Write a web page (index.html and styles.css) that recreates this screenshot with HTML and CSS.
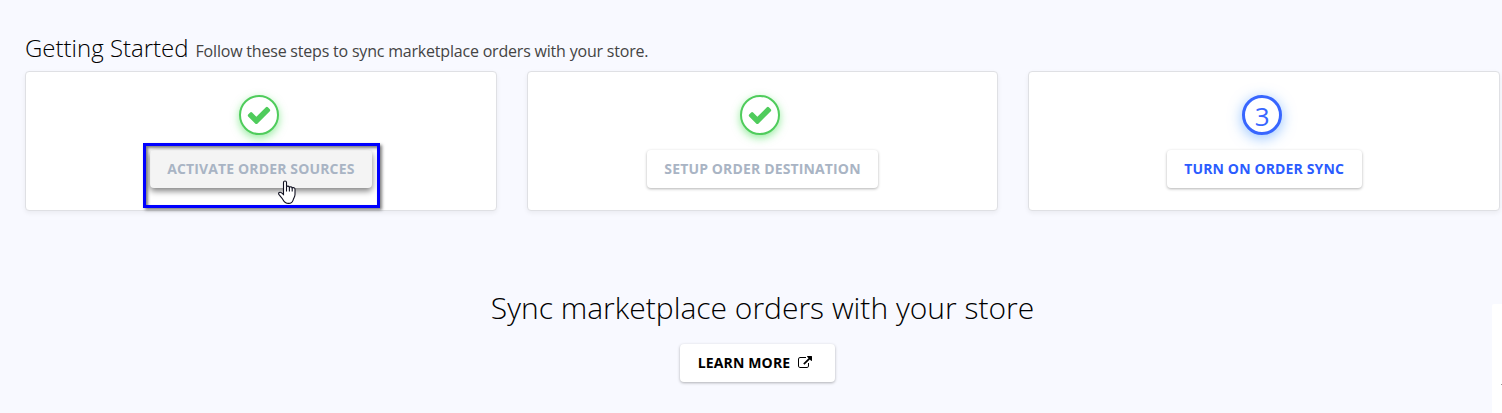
FILE: index.html
```html
<!DOCTYPE html>
<html lang="en">
<head>
  <meta charset="UTF-8">
  <title>Getting Started</title>
  <link rel="stylesheet" href="styles.css">
</head>
<body>

  <div class="page">
    <header class="heading">
      <h1>Getting Started</h1>
      <p>Follow these steps to sync marketplace orders with your store.</p>
    </header>

    <!-- Steps -->
    <div class="steps">
      <div class="card">
        <div class="circle done">
          <svg class="check" viewBox="0 0 1792 1792"><path d="M1671 566q0 40-28 68l-724 724-136 136q-28 28-68 28t-68-28l-136-136-362-362q-28-28-28-68t28-68l136-136q28-28 68-28t68 28l294 295 656-657q28-28 68-28t68 28l136 136q28 28 28 68z"/></svg>
        </div>
        <button class="btn muted hovered">Activate Order Sources</button>
        <div class="highlight"></div>
        <svg class="cursor" viewBox="0 0 18 24">
          <path d="M5.5 14.5V2.6c0-2.1 3-2.1 3 0v4.2c.5-1 2.7-.9 2.9.5.6-.8 2.6-.6 2.8.7 1-.7 2.8-.2 2.8 1.2v5.3c0 2.2-1.3 3.6-1.8 5.3-.7 2.2-2.2 3.6-4.6 3.6-2.9 0-4.4-1.3-5.6-3.7-.9-1.8-2.6-3.4-4-5.1-1.3-1.7 1-3.2 2.6-1.8z"/>
          <path d="M8.5 6.8v4.8M11.4 7.4v4.2M14.2 8.2v3.4"/>
        </svg>
      </div>

      <div class="card">
        <div class="circle done">
          <svg class="check" viewBox="0 0 1792 1792"><path d="M1671 566q0 40-28 68l-724 724-136 136q-28 28-68 28t-68-28l-136-136-362-362q-28-28-28-68t28-68l136-136q28-28 68-28t68 28l294 295 656-657q28-28 68-28t68 28l136 136q28 28 28 68z"/></svg>
        </div>
        <button class="btn muted">Setup Order Destination</button>
      </div>

      <div class="card">
        <div class="circle current">3</div>
        <button class="btn primary">Turn On Order Sync</button>
      </div>
    </div>

    <!-- Intro -->
    <section class="intro">
      <h2>Sync marketplace orders with your store</h2>
      <button class="btn learn-more">Learn More
        <svg class="external" viewBox="0 0 1792 1792"><path d="M1408 928v320q0 119-84.5 203.5t-203.5 84.5h-832q-119 0-203.5-84.5t-84.5-203.5v-832q0-119 84.5-203.5t203.5-84.5h704q14 0 23 9t9 23v64q0 14-9 23t-23 9h-704q-66 0-113 47t-47 113v832q0 66 47 113t113 47h832q66 0 113-47t47-113v-320q0-14 9-23t23-9h64q14 0 23 9t9 23zm384-864v512q0 26-19 45t-45 19-45-19l-176-176-652 652q-10 10-23 10t-23-10l-114-114q-10-10-10-23t10-23l652-652-176-176q-19-19-19-45t19-45 45-19h512q26 0 45 19t19 45z"/></svg>
      </button>
    </section>
  </div>

  <!-- Side widget -->
  <div class="side-tab"></div>

</body>
</html>
```
FILE: styles.css
```css
* {
  box-sizing: border-box;
}

body {
  margin: 0;
  height: 413px;
  overflow: hidden;
  background: #f8f9ff;
  color: #000;
  font-family: "Open Sans", sans-serif;
}

.page {
  padding: 31px 2px 0 25px;
}

.heading {
  display: flex;
  align-items: baseline;
  gap: 7px;
  height: 40px;
}

.heading h1 {
  margin: 0;
  font-size: 24px;
  font-weight: 300;
  line-height: 34px;
}

.heading p {
  margin: 0;
  font-size: 16px;
  letter-spacing: -0.2px;
  color: #444;
}

.steps {
  display: grid;
  grid-template-columns: repeat(3, 1fr);
  gap: 30px;
}

.card {
  position: relative;
  display: flex;
  flex-direction: column;
  align-items: center;
  height: 140px;
  padding-top: 23px;
  background: #fff;
  border: 1px solid #dfe0e4;
  border-radius: 4px;
  box-shadow: 0 2px 5px rgba(0, 0, 0, 0.06);
}

.circle {
  display: flex;
  align-items: center;
  justify-content: center;
  width: 40px;
  height: 40px;
  margin: 0 4px 15px 0;
  border-radius: 50%;
  background: #fff;
}

.circle.done {
  border: 2px solid #4fcc5c;
  box-shadow: 0 3px 8px rgba(64, 220, 80, 0.55);
}

.circle.current {
  padding-top: 2px;
  border: 3px solid #3866ff;
  box-shadow: 0 3px 14px rgba(60, 145, 255, 0.55);
  color: #3866ff;
  font-size: 26px;
  font-weight: 500;
  line-height: 34px;
}

.check {
  width: 26px;
  height: 26px;
  fill: #4fcc5c;
}

.btn {
  display: flex;
  align-items: center;
  justify-content: center;
  height: 38px;
  padding: 0 17.5px 2px;
  border: none;
  border-radius: 4px;
  background: #fff;
  box-shadow: 0 1px 3px rgba(0, 0, 0, 0.3);
  color: #000;
  font-family: inherit;
  font-size: 14px;
  font-weight: 700;
  letter-spacing: 0.14px;
  text-transform: uppercase;
  white-space: nowrap;
}

.btn.muted {
  color: #a9b4c4;
}

.btn.hovered {
  background: #f4f4f4;
  box-shadow: 0 3px 6px rgba(0, 0, 0, 0.5);
}

.btn.primary {
  color: #2b5cff;
}

.highlight {
  position: absolute;
  top: 71px;
  left: 117px;
  width: 237px;
  height: 65px;
  border: 3px solid #00f;
  box-shadow: 2px 2px 3px rgba(0, 0, 0, 0.5), inset 2px 2px 3px rgba(0, 0, 0, 0.5);
}

.cursor {
  position: absolute;
  top: 108px;
  left: 252px;
  width: 18px;
  height: 24px;
  fill: #fff;
  stroke: #101020;
  stroke-width: 1.1;
}

.intro {
  display: flex;
  flex-direction: column;
  align-items: center;
  padding-top: 75px;
}

.intro h2 {
  margin: 0 0 15px;
  font-size: 30px;
  font-weight: 300;
  line-height: 43px;
}

.learn-more {
  margin-right: 10px;
  padding-right: 22.5px;
}

.external {
  width: 14px;
  height: 14px;
  margin: 1px 0 0 8px;
}

.side-tab {
  position: absolute;
  right: 0;
  bottom: 0;
  width: 10px;
  height: 109px;
  border-radius: 2px 0 0 0;
  background: #fff;
}

.side-tab::after {
  content: "";
  position: absolute;
  top: 80px;
  right: 0;
  width: 1px;
  height: 1px;
  background: #999;
}
```
